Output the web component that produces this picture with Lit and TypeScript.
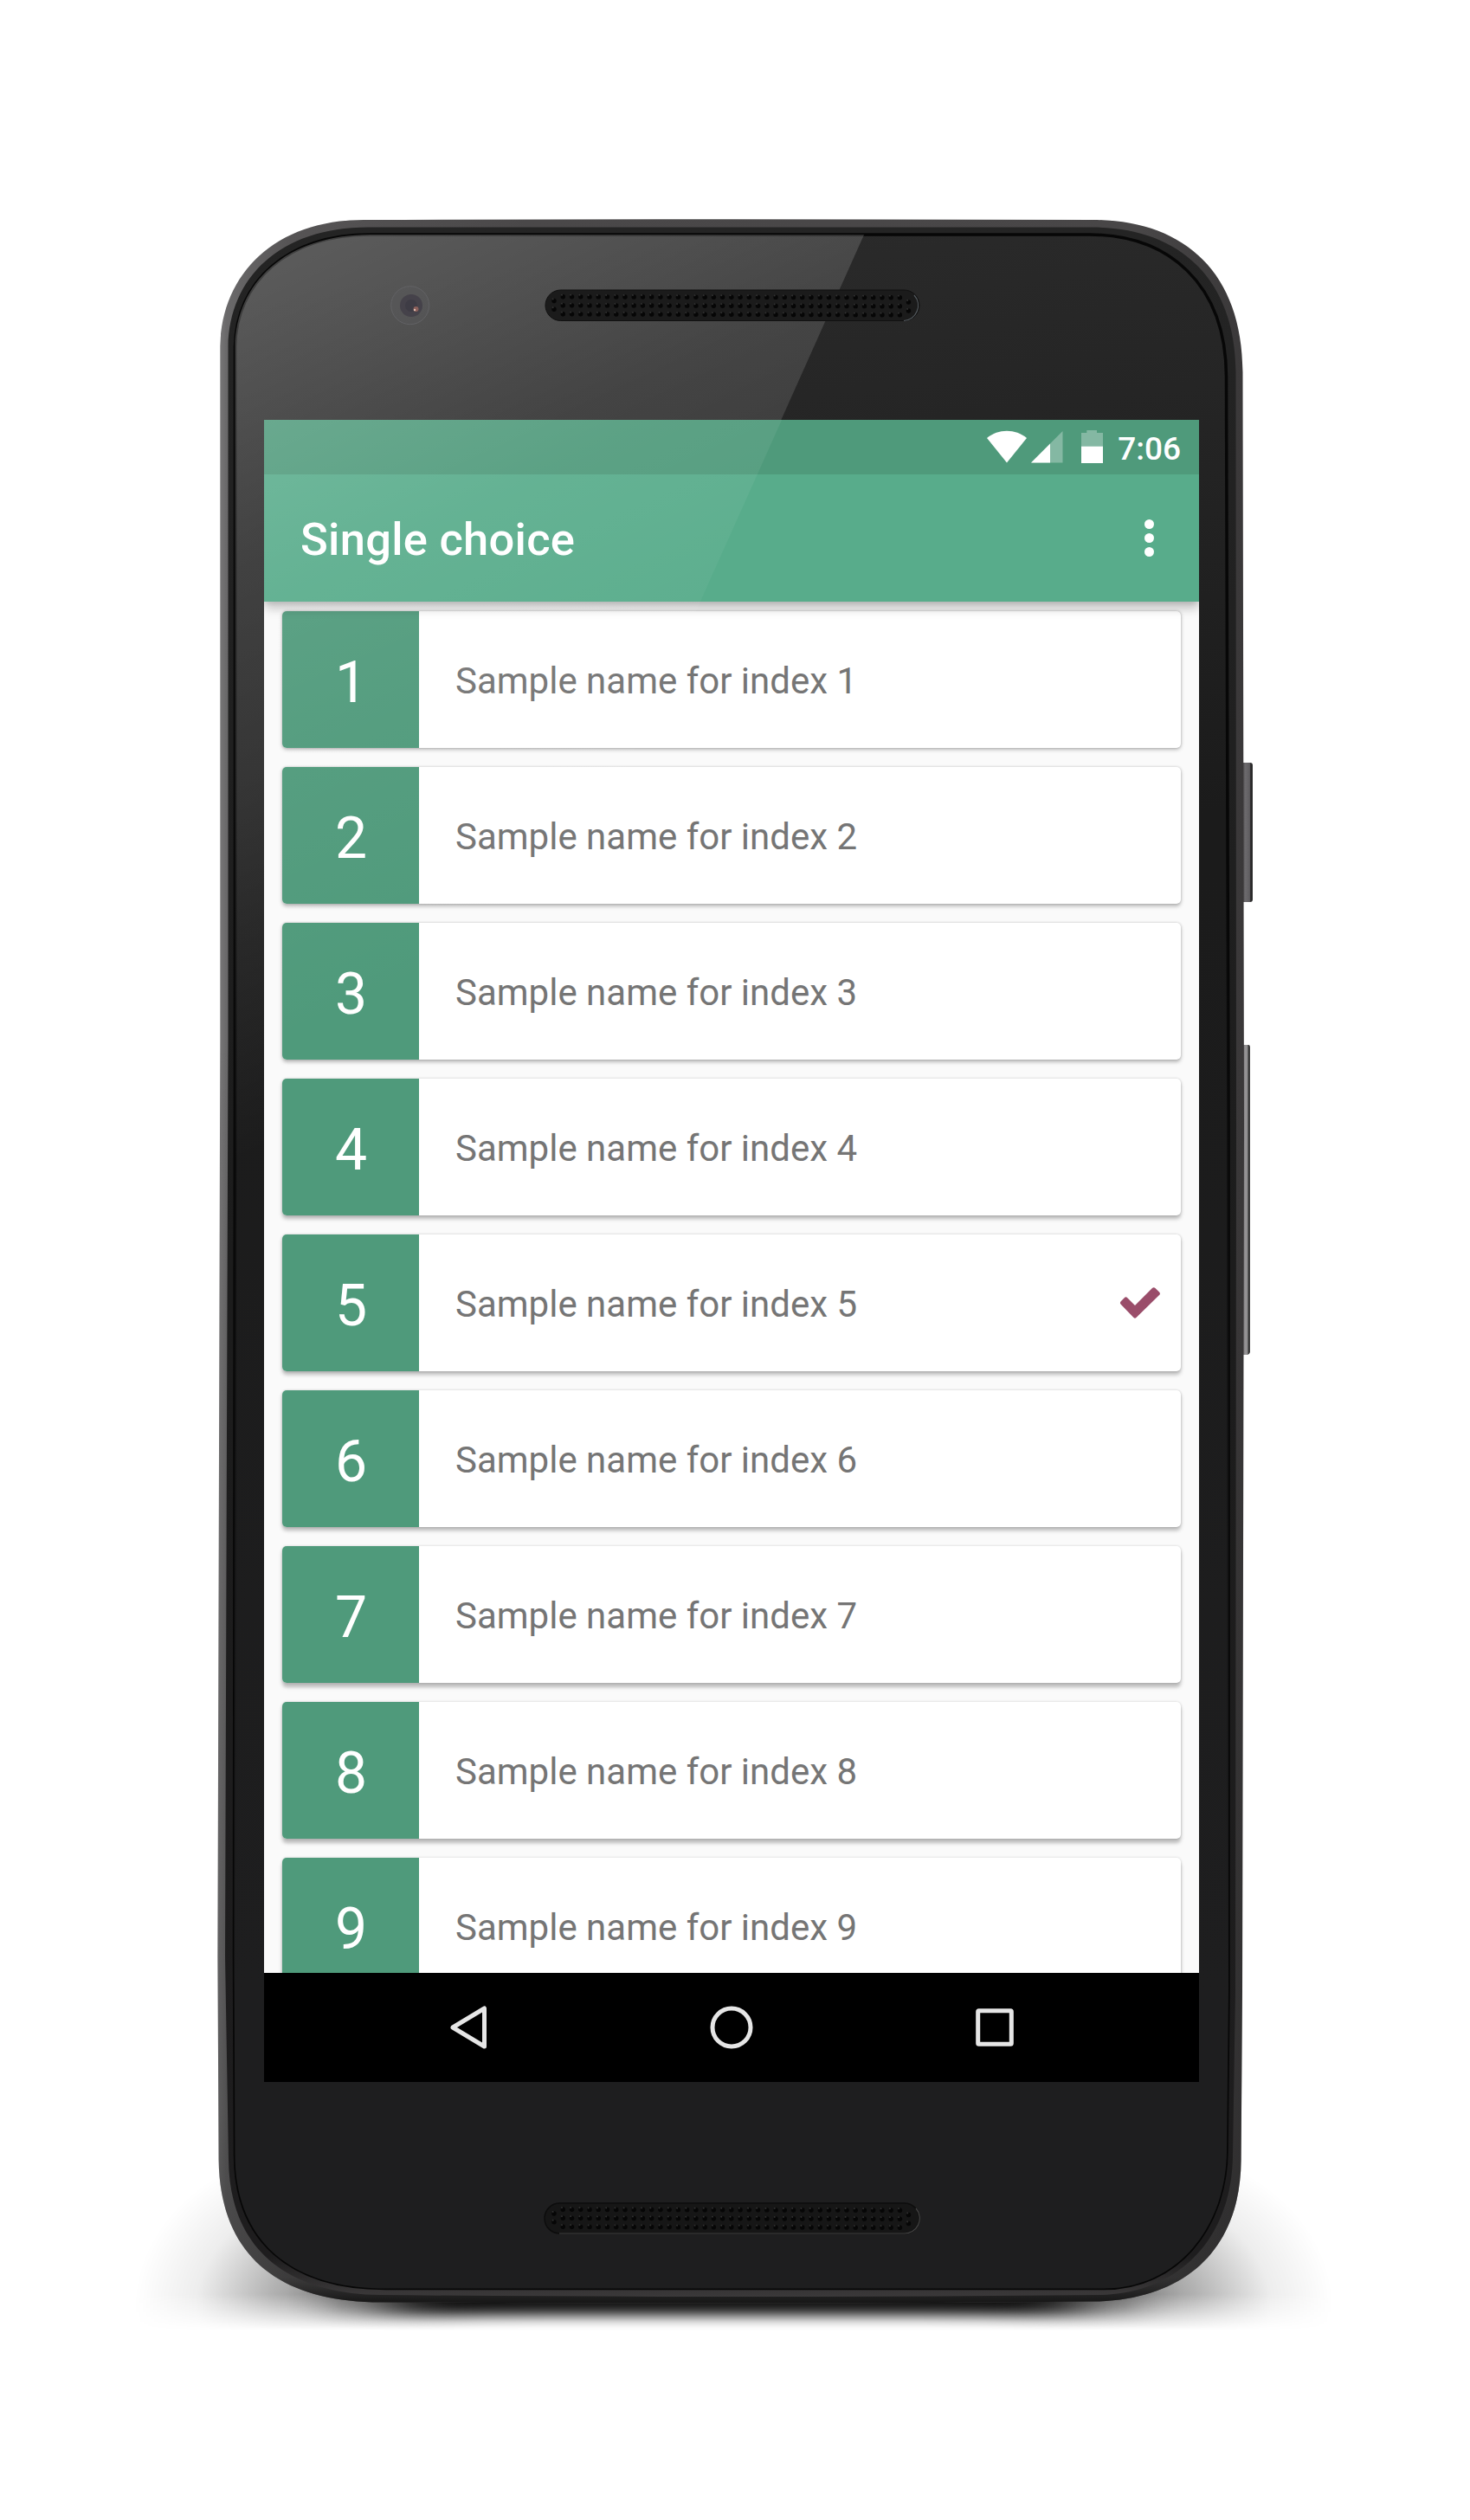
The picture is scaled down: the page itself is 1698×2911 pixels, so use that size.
import { LitElement, html, svg, css } from "lit";
import { customElement, property } from "lit/decorators.js";

const hole = (x: number, y: number) => svg`<circle cx=${x} cy=${y} r="2.7" fill="#060606"/><circle cx=${x - 1.3} cy=${y - 2} r="1" fill="#4a4a4a" opacity=".6"/>`;

const grille = (top: number) => {
  const holes = [];
  for (let i = 0; i < 39; i++)
    for (let r = 0; r < 3; r++) holes.push(hole(650.3 + i * 10.24, top + 7.8 + r * 10 + i * 0.025));
  holes.push(hole(640, top + 12.5), hole(640, top + 22.3), hole(1049.5, top + 14), hole(1049.5, top + 24));
  return holes;
};

@customElement("phone-body")
export class PhoneBody extends LitElement {
  static styles = css`
    :host { display: block; }
    svg { display: block; }
  `;
  render() {
    const outer = "M420 254Q840 252.600 1262 254C1365 254 1435 312 1435.500 430L1437 1300L1435 2300L1433.600 2495C1433 2594 1375 2654 1270 2658.500Q1070 2660.500 850 2660.500Q640 2660.500 440 2659.500C320 2659.500 254 2604 252.600 2495L251.400 2260L254.300 1200V400C256 316 318 254 420 254Z";
    const lip = "M425 262.500H1262C1358 262.500 1427 318 1427.500 430L1428 1300L1427 2300L1424 2490C1423 2581 1367 2648 1272 2651Q1070 2653 850 2653Q640 2653 440 2651C328 2650 265 2595 264 2495L260 2260L263.500 1200V400C265 321 323 262.500 425 262.500Z";
    const glass = "M428 271H1258C1350 271 1416 328 1416.500 435L1419 1300V2300L1417 2485C1416 2573 1360 2643.500 1275 2643.500H445C335 2643.500 272 2588 271.500 2490L270.500 2260L271.500 1200V400C273 327 330 271 428 271Z";
    return html`<svg width="1698" height="2911" viewBox="0 0 1698 2911">
      <defs>
        <linearGradient id="rim" x1="252" x2="1437" y1="0" y2="0" gradientUnits="userSpaceOnUse">
          <stop offset="0" stop-color="#7b7a7b"/><stop offset=".008" stop-color="#6a696a"/><stop offset=".07" stop-color="#565455"/><stop offset=".3" stop-color="#4a4849"/>
          <stop offset=".9" stop-color="#484647"/><stop offset="1" stop-color="#3a3839"/>
        </linearGradient>
        <linearGradient id="rimDown" x1="0" x2="0" y1="1200" y2="2660" gradientUnits="userSpaceOnUse">
          <stop offset="0" stop-color="#222" stop-opacity="0"/><stop offset=".85" stop-color="#222" stop-opacity=".35"/><stop offset=".98" stop-color="#222" stop-opacity=".5"/><stop offset="1" stop-color="#161616" stop-opacity="1"/>
        </linearGradient>
        <linearGradient id="lip" x1="0" x2="0" y1="262" y2="2654" gradientUnits="userSpaceOnUse">
          <stop offset="0" stop-color="#242424"/><stop offset=".5" stop-color="#1c1c1c"/><stop offset=".98" stop-color="#1e1d1e"/><stop offset="1" stop-color="#3c3a3b"/>
        </linearGradient>
        <linearGradient id="glass" x1="850" x2="950" y1="270" y2="1000" gradientUnits="userSpaceOnUse">
          <stop offset="0" stop-color="#2a2a2a"/><stop offset="1" stop-color="#1b1b1b"/>
        </linearGradient>
        <linearGradient id="lower" x1="0" x2="0" y1="1000" y2="2300" gradientUnits="userSpaceOnUse">
          <stop offset="0" stop-color="#1e1e1f" stop-opacity="0"/><stop offset="1" stop-color="#1e1e1f"/>
        </linearGradient>
        <linearGradient id="glare" x1="300" y1="270" x2="700" y2="1150" gradientUnits="userSpaceOnUse">
          <stop offset="0" stop-color="#fff" stop-opacity=".24"/><stop offset=".35" stop-color="#fff" stop-opacity=".135"/>
          <stop offset=".6" stop-color="#fff" stop-opacity=".1"/><stop offset="1" stop-color="#fff" stop-opacity="0"/>
        </linearGradient>
        <radialGradient id="side"><stop offset="0" stop-color="#000" stop-opacity=".5"/><stop offset=".35" stop-color="#000" stop-opacity=".3"/><stop offset=".7" stop-color="#000" stop-opacity=".07"/><stop offset="1" stop-color="#000" stop-opacity="0"/></radialGradient>
        <linearGradient id="floorFade" x1="0" x2="0" y1="2650" y2="2692" gradientUnits="userSpaceOnUse">
          <stop offset="0" stop-color="#fff"/><stop offset=".5" stop-color="#fff" stop-opacity=".5"/><stop offset="1" stop-color="#fff" stop-opacity="0"/>
        </linearGradient>
        <mask id="floor" maskUnits="userSpaceOnUse" x="0" y="2400" width="1698" height="400"><rect y="2400" width="1698" height="400" fill="url(#floorFade)"/></mask>
        <filter id="soft" x="-20%" y="-100%" width="140%" height="300%"><feGaussianBlur stdDeviation="46 8"/></filter>
        <linearGradient id="key" x1="0" x2="1" y1="0" y2="0"><stop offset="0" stop-color="#4c4a4c"/><stop offset=".3" stop-color="#6c6a6d"/><stop offset=".7" stop-color="#5f5d60"/><stop offset=".82" stop-color="#242324"/><stop offset="1" stop-color="#333"/></linearGradient>
        <linearGradient id="volume" x1="0" x2="1" y1="0" y2="0"><stop offset="0" stop-color="#777577"/><stop offset=".5" stop-color="#9a989a"/><stop offset=".75" stop-color="#666"/><stop offset=".85" stop-color="#252425"/><stop offset="1" stop-color="#555"/></linearGradient>
        <clipPath id="face"><path d=${glass}/></clipPath>
      </defs>
      <g mask="url(#floor)">
        <ellipse cx="395" cy="2665" rx="240" ry="190" fill="url(#side)"/>
        <ellipse cx="1300" cy="2665" rx="240" ry="190" fill="url(#side)"/>
      </g>
      <rect x="435" y="2600" width="825" height="75" fill="#000" opacity=".93" filter="url(#soft)"/>
      <path d="M1435 881H1444Q1447 881 1447 884V1039Q1447 1042 1444 1042H1435Z" fill="url(#key)"/>
      <path d="M1435 1207H1442Q1444 1207 1444 1210V1562Q1443 1565 1441 1565H1435Z" fill="url(#volume)"/>
      <path d=${outer} fill="url(#rim)"/>
      <path d=${outer} fill="url(#rimDown)"/>
      <path d=${lip} fill="url(#lip)"/>
      <path d=${glass} fill="url(#glass)" stroke="#070707" stroke-width="3.500"/>
      <path d=${glass} fill="url(#lower)"/>
      <path d="M260 260H1003L560 1250L260 1500Z" fill="url(#glare)" clip-path="url(#face)"/>
      <circle cx="473.700" cy="352.700" r="22" fill="#5c5c5e" fill-opacity=".35" stroke="#626265" stroke-width="1"/>
      <circle cx="475" cy="353" r="13" fill="#45424a"/>
      <circle cx="475" cy="353" r="7" fill="#3e3c45"/>
      <circle cx="480.500" cy="357" r="3" fill="#8b605b"/><circle cx="479" cy="358" r="1.200" fill="#e4c2b5"/>
      <rect x="630" y="335" width="432" height="35.500" rx="17.700" fill="#1b1b1b" stroke="#111" stroke-width="1"/>
      <path d="M1044 370.500A17.700 17.700 0 0 0 1056 341" fill="none" stroke="#555b60" stroke-width="1.200"/>
      ${grille(335)}
      <rect x="629" y="2545" width="433" height="35" rx="17.500" fill="#161616" stroke="#0d0d0d" stroke-width="1.500"/>
      <path d="M646 2580H1044A17.500 17.500 0 0 0 1058 2551" fill="none" stroke="#444" stroke-width="1.200"/>
      ${grille(2544.5)}
    </svg>`;
  }
}

@customElement("choice-card")
export class ChoiceCard extends LitElement {
  @property({ type: Number }) index = 1;
  @property({ type: Boolean }) chosen = false;
  static styles = css`
    :host { display: flex; flex: none; height: 158px; border-radius: 5px; background: #fff; align-items: center; overflow: hidden;
      box-shadow: 0 var(--drop, 3px) 4px rgba(0,0,0,.25), 0 0 3px rgba(0,0,0,.17); }
    .badge { width: 158px; height: 158px; background: #4f9a7b; color: #fff; font-size: 66px; display: flex; align-items: center; justify-content: center; padding: 6px 0 0 1px; box-sizing: border-box; }
    .name { flex: 1; padding: 4px 0 0 42px; font-size: 42px; line-height: 50px; color: #757575; white-space: nowrap; }
    .check { width: 48px; height: 38px; margin-right: 23px; }
  `;
  render() {
    return html`<div class="badge">${this.index}</div>
      <div class="name">Sample name for index ${this.index}</div>
      ${this.chosen ? html`<svg class="check" viewBox="13 11 48 38"><path d="M16.500 30L20.500 26L31 36.500L52.700 14.800L57.300 19.300L31 45Z" fill="#9a4d6a" stroke="#9a4d6a" stroke-width="5" stroke-linejoin="round"/></svg>` : null}`;
  }
}

@customElement("app-root")
export class AppRoot extends LitElement {
  static styles = css`
    :host { display: block; width: 1698px; height: 2911px; background: #fff; font-family: Roboto, sans-serif; }
    .stage { position: relative; width: 1698px; height: 2911px; box-sizing: border-box; padding: 485px 313px 506px 305px; }
    .device { position: absolute; inset: 0; }
    .screen { position: relative; width: 1080px; height: 1920px; display: flex; flex-direction: column; background: #fafafa; overflow: hidden; }
    .status { flex: none; height: 63px; background: #4f9a7b; color: #fff; display: flex; align-items: center; justify-content: flex-end; padding-right: 21px; box-sizing: border-box; position: relative; z-index: 2; }
    .icons { width: 140px; height: 63px; margin-right: 13px; }
    .clock { font-size: 37px; font-weight: 500; line-height: 63px; padding-top: 2px; box-sizing: border-box; height: 63px; }
    .bar { flex: none; height: 147px; background: #58ac8b; color: #fff; display: flex; align-items: center; justify-content: space-between; padding: 0 52px 0 42px; box-sizing: border-box; position: relative; z-index: 1; box-shadow: 0 9px 11px -1px rgba(0,0,0,.22), 0 2px 6px rgba(0,0,0,.1); }
    .title { font-size: 52.5px; font-weight: 500; line-height: 60px; padding-top: 3px; letter-spacing: .25px; }
    .dots { display: flex; flex-direction: column; gap: 5px; }
    .dot { width: 11px; height: 11px; border-radius: 50%; background: #fff; }
    .list { flex: 1; min-height: 0; overflow: hidden; display: flex; flex-direction: column; gap: 22px; padding: 11px 21px 0; }
    .nav { flex: none; height: 126px; background: #000; display: flex; justify-content: center; gap: 240px; align-items: center; position: relative; }
    .key { width: 64px; height: 64px; fill: none; stroke: #e6e6e6; stroke-width: 5; stroke-linejoin: round; }
    .glare { position: absolute; inset: 0; z-index: 3; pointer-events: none; }
  `;
  render() {
    return html`<main class="stage">
      <phone-body class="device"></phone-body>
      <section class="screen">
        <div class="status">
          <svg class="icons" viewBox="1137 485 140 63">
            <path d="M1139 506C1152 495 1172 495 1185 506L1162 534.500Z" fill="#fff"/>
            <path d="M1226.500 498V534.500H1190Z" fill="#fff" opacity=".3"/><path d="M1212 512.500V534.500H1190Z" fill="#fff"/>
            <path d="M1254.300 497H1266V500H1273V516H1248V500H1254.300Z" fill="#fff" opacity=".3"/><path d="M1248 515.700H1273V535H1248Z" fill="#fff"/>
          </svg>
          <span class="clock">7:06</span>
        </div>
        <header class="bar">
          <span class="title">Single choice</span>
          <div class="dots"><i class="dot"></i><i class="dot"></i><i class="dot"></i></div>
        </header>
        <div class="list">
          ${[1, 2, 3, 4, 5, 6, 7, 8, 9].map((n) => html`<choice-card style="--drop:${1.5 + n * 0.4}px" .index=${n} .chosen=${n === 5}></choice-card>`)}
        </div>
        <nav class="nav">
          <svg class="key" viewBox="0 0 64 64"><path d="M50.500 10V54L14 32Z"/></svg>
          <svg class="key" viewBox="0 0 64 64"><circle cx="32" cy="32" r="22"/></svg>
          <svg class="key" viewBox="0 0 64 64"><rect x="12.700" y="12.700" width="38.600" height="38.600" rx="1"/></svg>
        </nav>
        <svg class="glare" width="1080" height="1920" viewBox="305 485 1080 1920">
          <defs><linearGradient id="sheen" x1="300" y1="270" x2="700" y2="1150" gradientUnits="userSpaceOnUse">
            <stop offset=".2" stop-color="#fff" stop-opacity=".15"/><stop offset=".4" stop-color="#fff" stop-opacity=".075"/><stop offset=".56" stop-color="#fff" stop-opacity=".045"/><stop offset=".9" stop-color="#fff" stop-opacity="0"/>
          </linearGradient></defs>
          <path d="M305 485H903L560 1250H305Z" fill="url(#sheen)"/>
        </svg>
      </section>
    </main>`;
  }
}
